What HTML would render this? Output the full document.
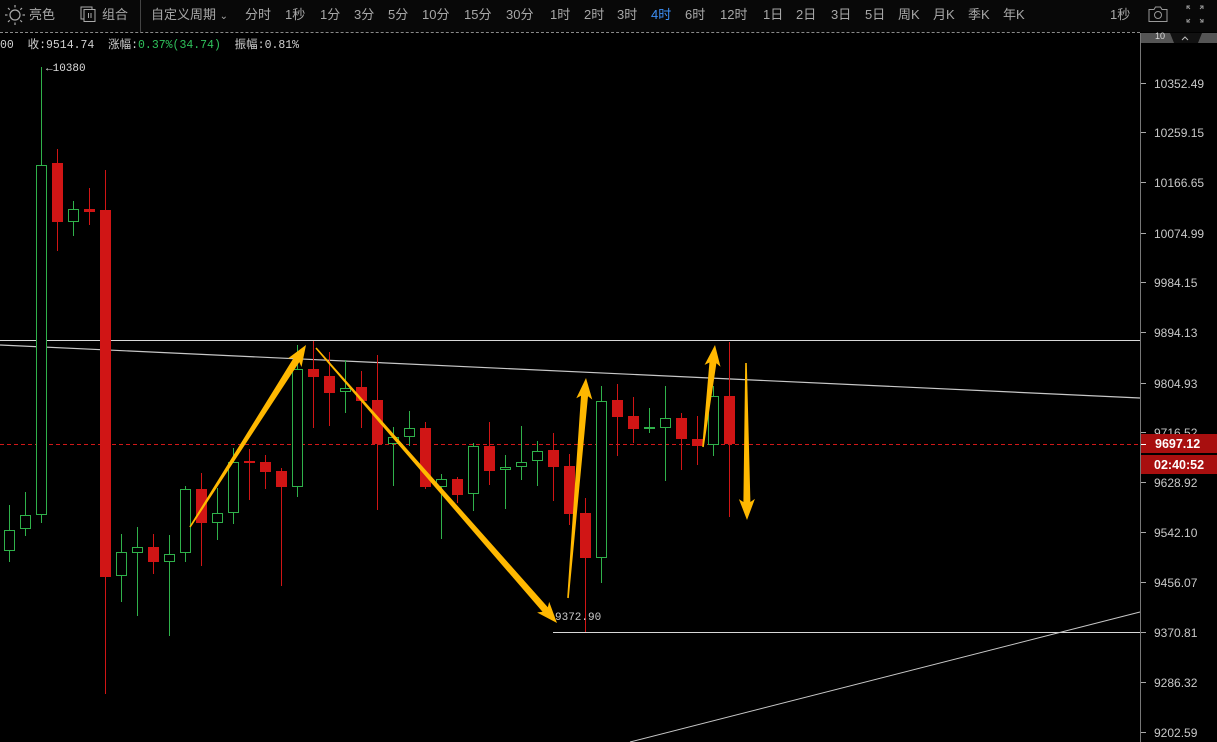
<!DOCTYPE html>
<html><head><meta charset="utf-8">
<style>
html,body{margin:0;padding:0;background:#000;width:1217px;height:742px;overflow:hidden;font-family:"Liberation Sans","Noto Sans CJK SC",sans-serif;}
#tb{position:absolute;left:0;top:0;width:1217px;height:32px;background:#080808;color:#a8a8a8;font-size:13px;}
#tb span{position:absolute;top:4px;white-space:nowrap;}
#dash{position:absolute;left:0;top:32px;width:1140px;height:0;border-top:1px dashed #8a8a8a;}
#info{position:absolute;left:0;top:36px;font-family:"Liberation Mono","Noto Sans CJK SC",monospace;font-size:11.5px;color:#d0d0d0;white-space:pre;}
#info b{font-weight:normal;color:#2fc25b;}
svg{position:absolute;left:0;top:0;}
</style></head><body>
<div id="tb">
<svg width="24" height="24" style="left:3px;top:3px" viewBox="0 0 24 24"><circle cx="12" cy="12" r="5" fill="none" stroke="#aaa" stroke-width="1.2"/><g stroke="#aaa" stroke-width="1.2"><line x1="12" y1="2" x2="12" y2="4.5"/><line x1="12" y1="19.5" x2="12" y2="22"/><line x1="2" y1="12" x2="4.5" y2="12"/><line x1="19.5" y1="12" x2="22" y2="12"/><line x1="5" y1="5" x2="6.7" y2="6.7"/><line x1="17.3" y1="17.3" x2="19" y2="19"/><line x1="5" y1="19" x2="6.7" y2="17.3"/><line x1="17.3" y1="6.7" x2="19" y2="5"/></g></svg>
<span style="left:29px">亮色</span>
<svg width="16" height="16" style="left:80px;top:6px" viewBox="0 0 16 16"><rect x="1" y="1" width="11" height="12" fill="none" stroke="#aaa"/><rect x="4" y="3.5" width="11" height="12" fill="#080808" stroke="#aaa"/><line x1="8.5" y1="7" x2="8.5" y2="12" stroke="#aaa"/><line x1="11" y1="7" x2="11" y2="12" stroke="#aaa"/></svg>
<span style="left:102px">组合</span>
<div style="position:absolute;left:140px;top:0;width:1px;height:32px;background:#444"></div>
<span style="left:151px">自定义周期 <small style="font-size:10px">⌄</small></span>
<span style="left:245px">分时</span><span style="left:285px">1秒</span><span style="left:320px">1分</span><span style="left:354px">3分</span><span style="left:388px">5分</span><span style="left:422px">10分</span><span style="left:464px">15分</span><span style="left:506px">30分</span><span style="left:550px">1时</span><span style="left:584px">2时</span><span style="left:617px">3时</span><span style="left:651px;color:#3d8ff5">4时</span><span style="left:685px">6时</span><span style="left:720px">12时</span><span style="left:763px">1日</span><span style="left:796px">2日</span><span style="left:831px">3日</span><span style="left:865px">5日</span><span style="left:898px">周K</span><span style="left:933px">月K</span><span style="left:968px">季K</span><span style="left:1003px">年K</span><span style="left:1110px">1秒</span>
<svg width="22" height="18" style="left:1147px;top:5px" viewBox="0 0 22 18"><path d="M2 4.5h5l1.5-2.5h5l1.5 2.5h5v12h-18z" fill="none" stroke="#999"/><circle cx="11" cy="10" r="3.5" fill="none" stroke="#999"/></svg>
<svg width="18" height="18" style="left:1186px;top:5px" viewBox="0 0 18 18" stroke="#999" fill="none"><path d="M1 4V1h3M14 1h3v3M17 14v3h-3M4 17H1v-3M1 1l3 3M17 1l-3 3M17 17l-3-3M1 17l3-3"/></svg>
</div>
<div id="dash"></div>
<svg id="ch" width="1217" height="742"></svg>
<div id="info">00  收:9514.74  涨幅:<b>0.37%(34.74)</b>  振幅:0.81%</div>
<script>
var c=[
[9,'g',530,551,505,562],[25,'g',515,529,492,536],[41,'g',165,515,67,523],[57,'r',163,222,149,251],[73,'g',209,222,201,236],[89,'r',209,212,188,225],[105,'r',210,577,170,694],[121,'g',552,576,534,602],[137,'g',547,553,527,616],[153,'r',547,562,534,574],[169,'g',554,562,535,636],[185,'g',489,553,486,562],[201,'r',489,523,473,566],[217,'g',513,523,488,540],[233,'g',462,513,448,524],[249,'r',461,463,449,500],[265,'r',462,472,455,489],[281,'r',471,487,468,586],[297,'g',369,487,345,497],[313,'r',369,377,341,428],[329,'r',376,393,352,426],[345,'g',388,392,360,413],[361,'r',387,401,371,428],[377,'r',400,444,355,510],[393,'g',437,444,427,486],[409,'g',428,437,411,446],[425,'r',428,487,422,489],[441,'g',479,487,474,539],[457,'r',479,495,477,503],[473,'g',446,494,443,511],[489,'r',446,471,422,485],[505,'g',467,470,455,509],[521,'g',462,467,426,480],[537,'g',451,461,441,486],[553,'r',450,467,433,501],[569,'r',466,514,454,525],[585,'r',513,558,498,632],[601,'g',401,558,386,583],[617,'r',400,417,384,456],[633,'r',416,429,397,443],[649,'g',427,428,408,433],[665,'g',418,428,386,481],[681,'r',418,439,413,470],[697,'r',439,446,416,465],[713,'g',396,445,386,456],[729,'r',396,444,342,517]];
var s='';
s+='<line x1="0" y1="340.5" x2="1140" y2="340.5" stroke="#d8d8d8"/>';
s+='<line x1="553" y1="632.5" x2="1140" y2="632.5" stroke="#d8d8d8"/>';
s+='<line x1="0" y1="345" x2="1140" y2="398" stroke="#c8c8c8" stroke-width="1.2"/>';
s+='<line x1="630" y1="742" x2="1140" y2="612" stroke="#c8c8c8"/>';
s+='<line x1="0" y1="444.5" x2="1140" y2="444.5" stroke="#d01818" stroke-dasharray="4,3"/>';
c.forEach(function(d){var x=d[0],col=d[1]=='g'?'#2fb14a':'#d01515';
 s+='<line x1="'+(x+.5)+'" y1="'+d[4]+'" x2="'+(x+.5)+'" y2="'+d[5]+'" stroke="'+col+'"/>';
 var h=Math.max(d[3]-d[2],2);
 if(d[1]=='g') s+='<rect x="'+(x-4.5)+'" y="'+(d[2]+.5)+'" width="10" height="'+(h-1)+'" fill="#000" stroke="'+col+'"/>';
 else s+='<rect x="'+(x-5)+'" y="'+d[2]+'" width="11" height="'+h+'" fill="'+col+'"/>';
});
s+='<text x="46" y="71" fill="#ddd" font-family="Liberation Mono" font-size="11">←10380</text>';
s+='<text x="555" y="620" fill="#ccc" font-family="Liberation Mono" font-size="11">9372.90</text>';
function arr(x1,y1,x2,y2){var dx=x2-x1,dy=y2-y1,L=Math.hypot(dx,dy),ux=dx/L,uy=dy/L,nx=-uy,ny=ux,hl=18,bx=x2-ux*hl,by=y2-uy*hl,w0=0.8,w1=3.5,hw=8;
 var p=[[x1+nx*w0,y1+ny*w0],[bx+nx*w1,by+ny*w1],[bx-ux*3+nx*hw,by-uy*3+ny*hw],[x2,y2],[bx-ux*3-nx*hw,by-uy*3-ny*hw],[bx-nx*w1,by-ny*w1],[x1-nx*w0,y1-ny*w0]];
 s+='<polygon points="'+p.map(function(q){return q[0].toFixed(1)+','+q[1].toFixed(1)}).join(' ')+'" fill="#ffb800"/>';}
arr(190,527,306,345);arr(316,348,557,623);arr(568,598,586,378);arr(703,447,715,345);arr(746,363,747,520);
s+='<rect x="1140" y="33" width="77" height="709" fill="#000"/>';
s+='<line x1="1140.5" y1="33" x2="1140.5" y2="742" stroke="#777"/>';
s+='<rect x="1141" y="33" width="76" height="10" fill="#555"/><path d="M1170 33l4 10h24l4-10z" fill="#111"/><path d="M1182 40l3-3 3 3" stroke="#bbb" fill="none"/><text x="1155" y="39" fill="#ddd" font-size="9" font-family="Liberation Sans">10</text>';
var ax=[[83,'10352.49'],[132,'10259.15'],[182,'10166.65'],[233,'10074.99'],[282,'9984.15'],[332,'9894.13'],[383,'9804.93'],[432,'9716.52'],[482,'9628.92'],[532,'9542.10'],[582,'9456.07'],[632,'9370.81'],[682,'9286.32'],[732,'9202.59']];
ax.forEach(function(a){s+='<line x1="1141" y1="'+(a[0]+.5)+'" x2="1146" y2="'+(a[0]+.5)+'" stroke="#aaa"/><text x="1154" y="'+(a[0]+5)+'" fill="#c8c8c8" font-size="12" font-family="Liberation Sans">'+a[1]+'</text>';});
s+='<rect x="1141" y="434" width="76" height="19" fill="#a80f0f"/><text x="1155" y="448" fill="#fff" font-size="12.5" font-weight="bold" font-family="Liberation Sans">9697.12</text><line x1="1141" y1="444.5" x2="1146" y2="444.5" stroke="#fff"/>';
s+='<rect x="1141" y="455" width="76" height="19" fill="#a80f0f"/><text x="1154" y="469" fill="#fff" font-size="12.5" font-weight="bold" font-family="Liberation Sans">02:40:52</text>';
document.getElementById('ch').innerHTML=s;
</script>
</body></html>
